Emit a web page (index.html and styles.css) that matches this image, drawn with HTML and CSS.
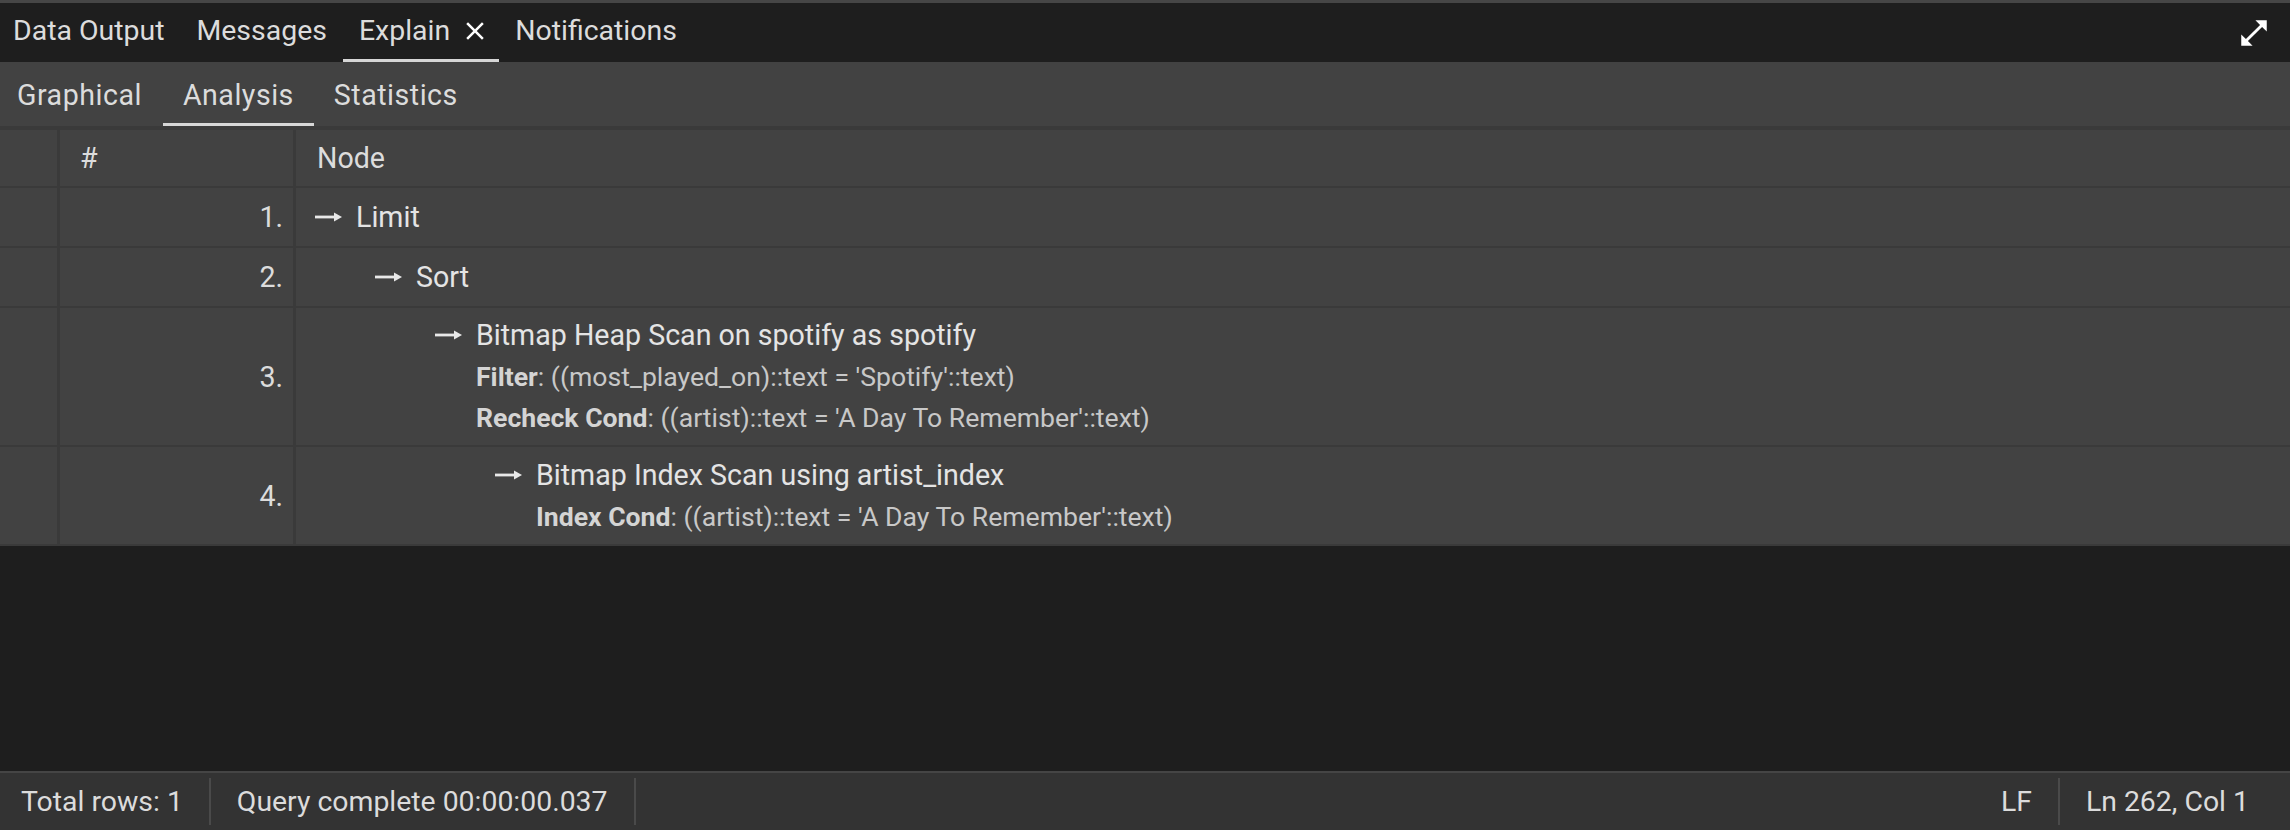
FILE: index.html
```html
<!DOCTYPE html>
<html>
<head>
<meta charset="utf-8">
<link rel="stylesheet" href="styles.css">
</head>
<body>
<div class="app">
  <div class="tabbar">
    <div class="tabs">
      <div class="tab first">Data Output</div>
      <div class="tab">Messages</div>
      <div class="tab active">Explain
        <svg class="close" viewBox="0 0 24 24"><path d="M19 6.41 17.59 5 12 10.59 6.41 5 5 6.41 10.59 12 5 17.59 6.41 19 12 13.41 17.59 19 19 17.59 13.41 12z"/></svg>
      </div>
      <div class="tab">Notifications</div>
    </div>
    <svg class="expand" viewBox="0 0 24 24"><path d="M21 11V3h-8l3.29 3.29-10 10L3 13v8h8l-3.29-3.29 10-10z"/></svg>
  </div>
  <div class="subbar">
    <div class="subtab first">Graphical</div>
    <div class="subtab active">Analysis</div>
    <div class="subtab">Statistics</div>
  </div>
  <div class="table">
    <div class="row head">
      <div class="c0"></div>
      <div class="chash">#</div>
      <div class="cnode hnode">Node</div>
    </div>
    <div class="row">
      <div class="c0"></div>
      <div class="cnum">1.</div>
      <div class="cnode lvl0"><div class="main"><svg class="arr" viewBox="0 0 27 10"><rect x="0" y="3.6" width="21" height="2.8"/><polygon points="19,0.5 27,5 19,9.5"/></svg>Limit</div></div>
    </div>
    <div class="row">
      <div class="c0"></div>
      <div class="cnum">2.</div>
      <div class="cnode lvl1"><div class="main"><svg class="arr" viewBox="0 0 27 10"><rect x="0" y="3.6" width="21" height="2.8"/><polygon points="19,0.5 27,5 19,9.5"/></svg>Sort</div></div>
    </div>
    <div class="row multi r3">
      <div class="c0"></div>
      <div class="cnum">3.</div>
      <div class="cnode lvl2">
        <div class="main"><svg class="arr" viewBox="0 0 27 10"><rect x="0" y="3.6" width="21" height="2.8"/><polygon points="19,0.5 27,5 19,9.5"/></svg>Bitmap Heap Scan on spotify as spotify</div>
        <div class="detail"><b>Filter</b>: ((most_played_on)::text = 'Spotify'::text)</div>
        <div class="detail"><b>Recheck Cond</b>: ((artist)::text = 'A Day To Remember'::text)</div>
      </div>
    </div>
    <div class="row multi">
      <div class="c0"></div>
      <div class="cnum">4.</div>
      <div class="cnode lvl3">
        <div class="main"><svg class="arr" viewBox="0 0 27 10"><rect x="0" y="3.6" width="21" height="2.8"/><polygon points="19,0.5 27,5 19,9.5"/></svg>Bitmap Index Scan using artist_index</div>
        <div class="detail"><b>Index Cond</b>: ((artist)::text = 'A Day To Remember'::text)</div>
      </div>
    </div>
  </div>
  <div class="filler"></div>
  <div class="status">
    <div class="sitem first">Total rows: 1</div>
    <div class="sitem">Query complete 00:00:00.037</div>
    <div class="spacer"></div>
    <div class="sitem">LF</div>
    <div class="sitem last">Ln 262, Col 1</div>
  </div>
</div>
</body>
</html>
```

FILE: styles.css
```css
* { box-sizing: border-box; }
html, body { margin: 0; padding: 0; }
body {
  width: 2290px;
  height: 830px;
  overflow: hidden;
  background: #1e1e1e;
  font-family: Roboto, "Liberation Sans", sans-serif;
  font-size: 28.6px;
  color: #e0e0e0;
}
.app {
  display: flex;
  flex-direction: column;
  height: 830px;
}
.tabbar {
  height: 62px;
  border-top: 3px solid #464646;
  background: #1e1e1e;
  display: flex;
  align-items: stretch;
  justify-content: space-between;
}
.tabs { display: flex; align-items: stretch; }
.tab {
  display: flex;
  align-items: center;
  padding: 0 16px;
  border-bottom: 3px solid transparent;
  color: #dcdcdc;
  line-height: 1;
  font-size: 28.45px;
}
.tab.first { padding-left: 13px; }
.tab.active { border-bottom-color: #d6d6d6; padding-right: 9px; }
.close {
  width: 30px;
  height: 30px;
  fill: #ffffff;
  margin-left: 10px;
}
.expand {
  width: 34px;
  height: 34px;
  fill: #ffffff;
  align-self: center;
  margin-right: 19px;
}
.subbar {
  height: 68px;
  background: #424242;
  border-bottom: 4px solid #3a3a3a;
  display: flex;
  align-items: stretch;
}
.subtab {
  display: flex;
  align-items: center;
  padding: 4px 20px 0;
  border-bottom: 3px solid transparent;
  color: #dcdcdc;
  letter-spacing: 0.5px;
}
.subtab.first { padding-left: 17px; padding-right: 21px; }
.subtab.active { border-bottom-color: #d6d6d6; }
.table {
  background: #424242;
}
.row {
  display: grid;
  grid-template-columns: 60px 236px 1fr;
  border-bottom: 2px solid #3a3a3a;
}
.row.head { height: 58px; }
.c0, .chash, .cnum {
  border-right: 3px solid #3a3a3a;
}
.chash {
  display: flex;
  align-items: center;
  padding-left: 20px;
  color: #dcdcdc;
}
.cnum {
  display: flex;
  align-items: center;
  justify-content: flex-end;
  padding-right: 10px;
  color: #dcdcdc;
}
.hnode {
  display: flex;
  align-items: center;
  padding-left: 21px;
  color: #dcdcdc;
}
.cnode { padding-top: 8px; padding-bottom: 8px; }
.multi .cnode { padding-top: 7px; padding-bottom: 7px; }
.multi.r3 .cnode { padding-top: 6px; }
.head .cnode { padding-top: 0; padding-bottom: 0; }
.lvl0 { padding-left: 19px; }
.lvl1 { padding-left: 79px; }
.lvl2 { padding-left: 139px; }
.lvl3 { padding-left: 199px; }
.main {
  line-height: 42px;
  color: #e4e4e4;
  white-space: nowrap;
  display: flex;
  align-items: center;
}
.arr {
  width: 27px;
  height: 10px;
  fill: #e8e8e8;
  margin-right: 14px;
  flex: none;
}
.detail {
  margin-left: 41px;
  line-height: 41px;
  font-size: 26.6px;
  color: #c8c8c8;
  white-space: nowrap;
}
.detail b {
  font-weight: 700;
  color: #d4d4d4;
}
.filler { flex: 1; background: #1e1e1e; }
.status {
  height: 59px;
  background: #333333;
  border-top: 2px solid #454545;
  display: flex;
  align-items: center;
  font-size: 28.4px;
}
.sitem {
  height: 47px;
  display: flex;
  align-items: center;
  padding: 0 26px;
  border-right: 2px solid #4a4a4a;
  color: #dcdcdc;
}
.sitem.first { padding-left: 21px; padding-right: 26px; }
.spacer { flex: 1; }
.sitem.last { border-right: none; padding-right: 41px; }
```
